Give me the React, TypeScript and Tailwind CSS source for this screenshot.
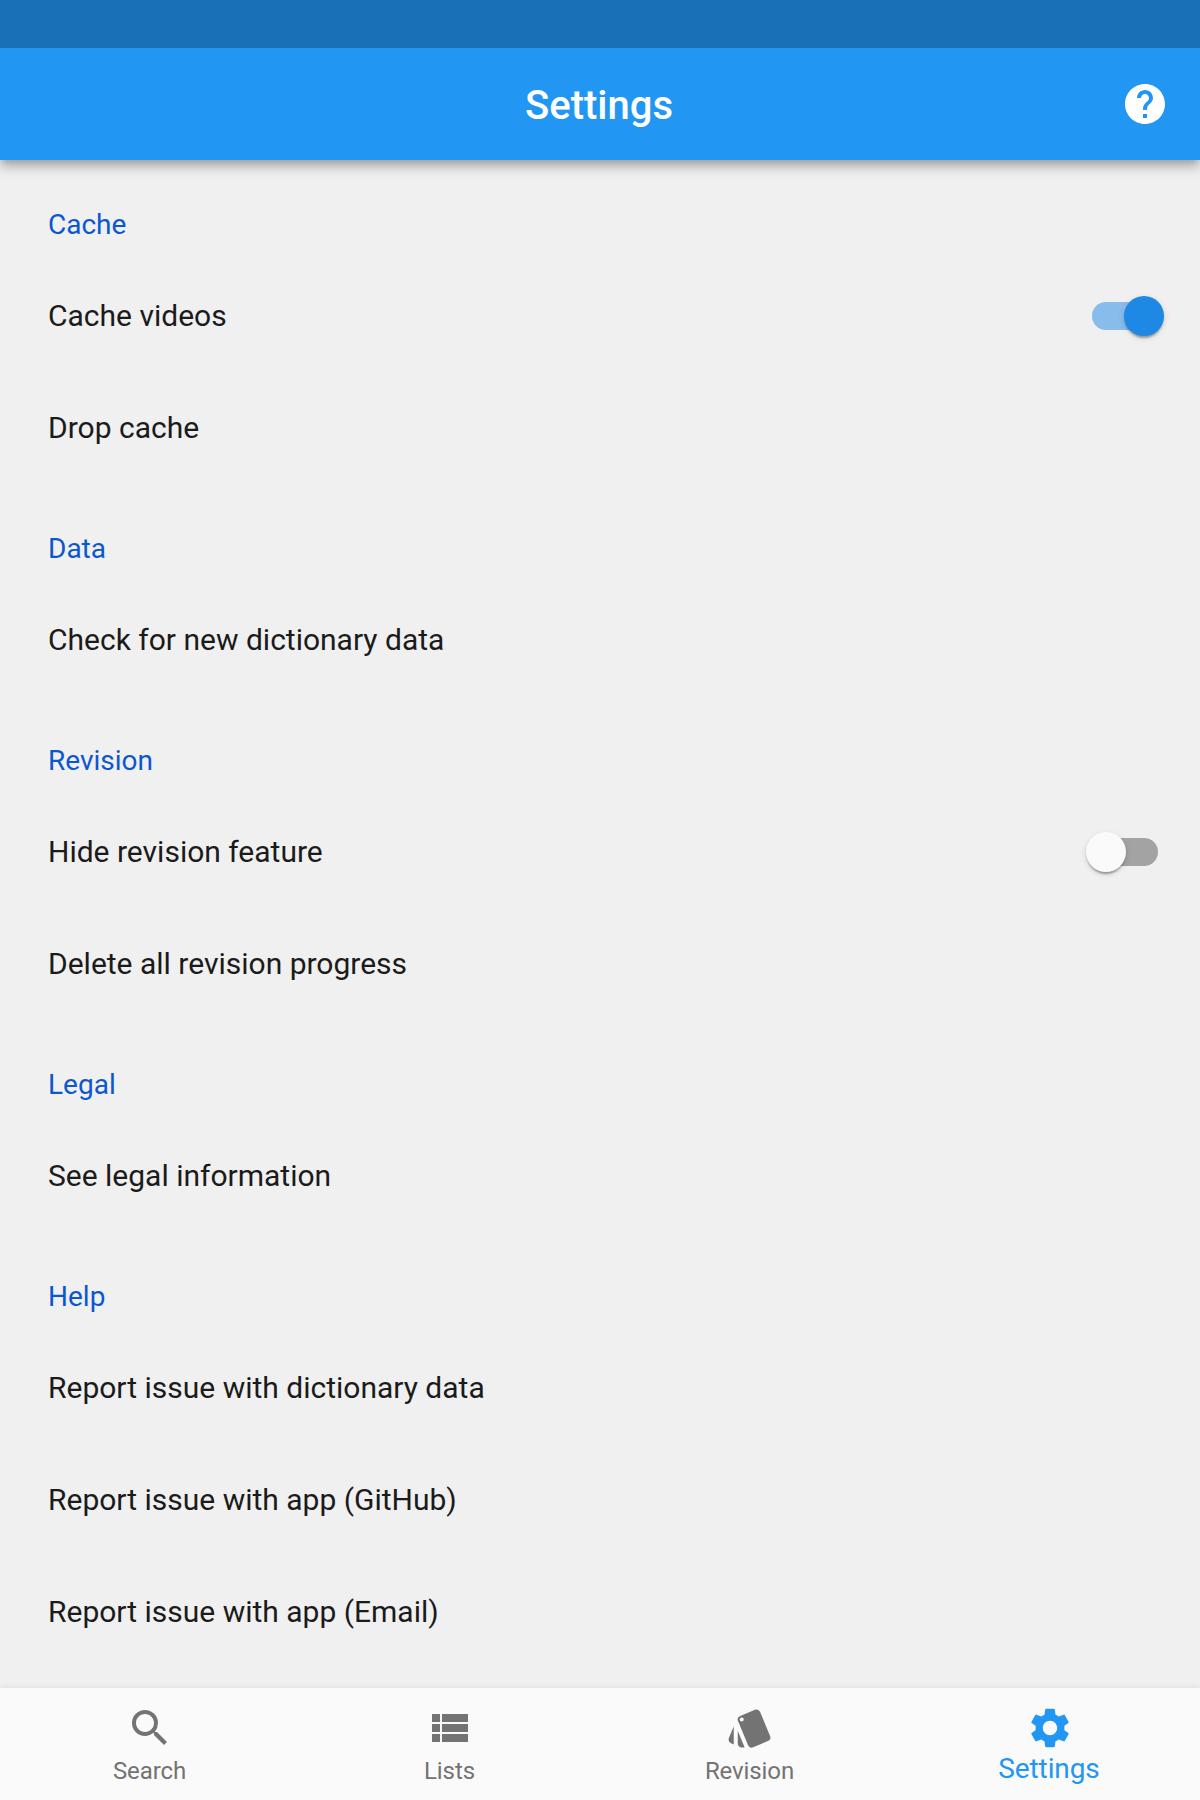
import { MdHelp, MdSearch, MdViewList, MdStyle, MdSettings } from 'react-icons/md';
import type { IconType } from 'react-icons';

type Row = { label: string; toggle?: 'on' | 'off' };

const sections: { title: string; rows: Row[] }[] = [
  { title: 'Cache', rows: [{ label: 'Cache videos', toggle: 'on' }, { label: 'Drop cache' }] },
  { title: 'Data', rows: [{ label: 'Check for new dictionary data' }] },
  { title: 'Revision', rows: [{ label: 'Hide revision feature', toggle: 'off' }, { label: 'Delete all revision progress' }] },
  { title: 'Legal', rows: [{ label: 'See legal information' }] },
  {
    title: 'Help',
    rows: [
      { label: 'Report issue with dictionary data' },
      { label: 'Report issue with app (GitHub)' },
      { label: 'Report issue with app (Email)' },
    ],
  },
];

const tabs: { label: string; icon: IconType; active?: boolean }[] = [
  { label: 'Search', icon: MdSearch },
  { label: 'Lists', icon: MdViewList },
  { label: 'Revision', icon: MdStyle },
  { label: 'Settings', icon: MdSettings, active: true },
];

const thumbShadow =
  'shadow-[0_4px_2px_-2px_rgba(0,0,0,0.2),0_2px_2px_0_rgba(0,0,0,0.14),0_2px_6px_0_rgba(0,0,0,0.12)]';

function Toggle({ on }: { on: boolean }) {
  return (
    <button
      role="switch"
      aria-checked={on}
      className={`relative mr-[42px] h-7 w-[66px] rounded-full ${on ? 'bg-[#1e88e5]/50' : 'bg-black/32'}`}
    >
      <span
        className={`absolute -top-1.5 size-10 rounded-full ${thumbShadow} ${on ? '-right-1.5 bg-[#1e88e5]' : '-left-1.5 bg-[#fafafa]'}`}
      />
    </button>
  );
}

export default function App() {
  return (
    <div className="flex h-[1800px] w-[1200px] flex-col overflow-hidden bg-[#f0f0f0] font-[Roboto,sans-serif] text-[#1b1b1b]">
      <div className="z-20 h-12 shrink-0 bg-[#1a70b7]" />
      <header className="z-10 grid h-28 shrink-0 grid-cols-[1fr_auto_1fr] items-center bg-[#2196f3] text-white shadow-[0_4px_8px_-2px_rgba(0,0,0,0.2),0_8px_10px_0_rgba(0,0,0,0.14),0_2px_20px_0_rgba(0,0,0,0.12)]">
        <span />
        <h1 className="pt-[3px] pr-0.5 text-[40px] font-medium leading-none">Settings</h1>
        <button aria-label="Help" className="mr-[31px] justify-self-end">
          <MdHelp className="size-12" />
        </button>
      </header>
      <main className="flex-1">
        {sections.map((s) => (
          <section key={s.title}>
            <h2 className="flex h-[100px] items-center pl-12 pt-[30px] text-[28px] text-[#0b57d0]">{s.title}</h2>
            {s.rows.map((r) => (
              <div key={r.label} className="flex h-28 items-center justify-between pl-12 text-[30px]">
                <span className="pb-0.5">{r.label}</span>
                {r.toggle && <Toggle on={r.toggle === 'on'} />}
              </div>
            ))}
          </section>
        ))}
      </main>
      <nav className="z-10 grid h-28 shrink-0 grid-cols-4 bg-[#fafafa] shadow-[0_-1px_6px_rgba(0,0,0,0.07)]">
        {tabs.map(({ label, icon: Icon, active }) => (
          <button
            key={label}
            className={`flex flex-col items-center pt-4 ${active ? 'text-[#2196f3]' : 'text-[#737373]'}`}
          >
            <Icon className="size-12" />
            <span
              className={
                active
                  ? 'pr-0.5 text-[28px] leading-[34px] tracking-[-0.1px]'
                  : 'mt-1 pr-px text-[24px] leading-[30px] tracking-[-0.1px]'
              }
            >
              {label}
            </span>
          </button>
        ))}
      </nav>
    </div>
  );
}
